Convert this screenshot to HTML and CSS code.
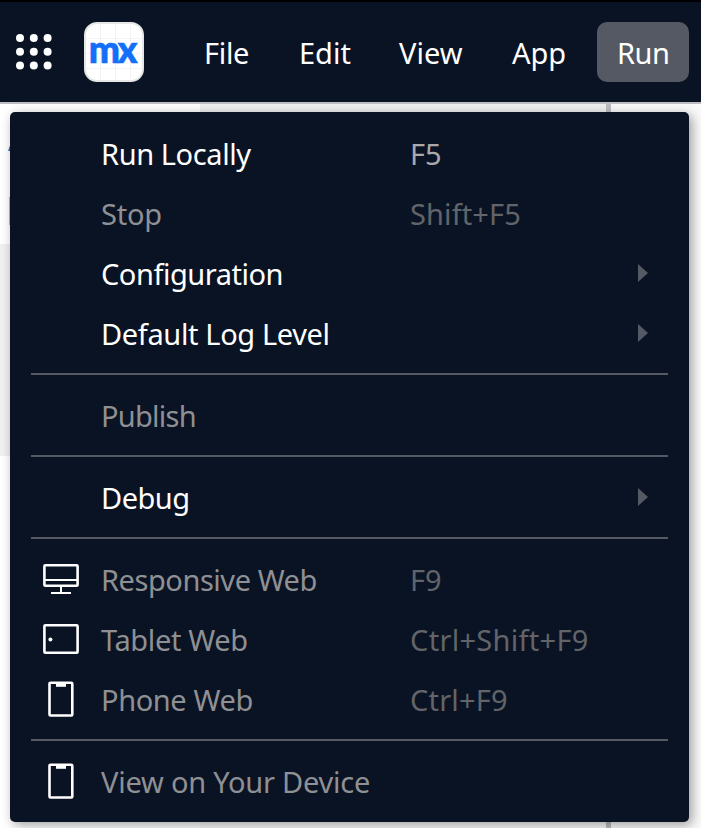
FILE: index.html
```html
<!DOCTYPE html>
<html lang="en">
<head>
<meta charset="utf-8">
<title>Run menu</title>
<link rel="stylesheet" href="styles.css">
</head>
<body>
<header class="bar">
  <svg class="grid" width="36" height="36" viewBox="0 0 36 36" fill="#fff"><circle cx="4" cy="4" r="4"/><circle cx="17.8" cy="4" r="4"/><circle cx="31.6" cy="4" r="4"/><circle cx="4" cy="17.8" r="4"/><circle cx="17.8" cy="17.8" r="4"/><circle cx="31.6" cy="17.8" r="4"/><circle cx="4" cy="31.6" r="4"/><circle cx="17.8" cy="31.6" r="4"/><circle cx="31.6" cy="31.6" r="4"/></svg>
  <div class="logo"><span>mx</span></div>
  <nav class="nav">
    <a class="tab file">File</a><a class="tab edit">Edit</a><a class="tab view">View</a><a class="tab app">App</a><a class="tab run">Run</a>
  </nav>
</header>
<main class="work">
  <div class="left"><div class="tree"><div class="sliver"></div><div class="edge"></div></div><div class="block"></div></div>
  <div class="mid"></div>
  <div class="split"></div>
  <div class="right"></div>
</main>
<div class="menu">
  <div class="item"><span class="label l-run">Run Locally</span><span class="key">F5</span></div>
  <div class="item off"><span class="label l-stop">Stop</span><span class="key k-shift">Shift+F5</span></div>
  <div class="item"><span class="label l-conf">Configuration</span><i class="arrow"></i></div>
  <div class="item"><span class="label l-log">Default Log Level</span><i class="arrow"></i></div>
  <hr>
  <div class="item off"><span class="label l-pub">Publish</span></div>
  <hr>
  <div class="item"><span class="label l-debug">Debug</span><i class="arrow"></i></div>
  <hr>
  <div class="item off">
    <svg class="icon" width="40" height="40" viewBox="0 0 40 40" fill="none" stroke="#fff" stroke-width="2"><rect x="3.4" y="6.3" width="33.2" height="20.4" rx="1" stroke-width="2.6"/><path d="M3 21h34M20 27v7M10 34h20"/></svg>
    <span class="label l-resp">Responsive Web</span><span class="key">F9</span></div>
  <div class="item off">
    <svg class="icon" width="40" height="40" viewBox="0 0 40 40" fill="none" stroke="#fff" stroke-width="2.6"><rect x="3.4" y="6.3" width="33.2" height="27.4" rx="1"/><circle cx="9.4" cy="20.6" r="2" fill="#fff" stroke="none"/></svg>
    <span class="label l-tab">Tablet Web</span><span class="key k-ctrlshift">Ctrl+Shift+F9</span></div>
  <div class="item off">
    <svg class="icon" width="40" height="40" viewBox="0 0 40 40" fill="none" stroke="#fff" stroke-width="2.6"><rect x="8.5" y="3.7" width="22.8" height="32.8" rx="1"/><path d="M15 6h10" stroke-width="3.6"/></svg>
    <span class="label l-phone">Phone Web</span><span class="key k-ctrl">Ctrl+F9</span></div>
  <hr>
  <div class="item off">
    <svg class="icon" width="40" height="40" viewBox="0 0 40 40" fill="none" stroke="#fff" stroke-width="2.6"><rect x="8.5" y="3.7" width="22.8" height="32.8" rx="1"/><path d="M15 6h10" stroke-width="3.6"/></svg>
    <span class="label l-device">View on Your Device</span></div>
</div>
</body>
</html>
```
FILE: styles.css
```css
* { box-sizing: border-box; }
body { margin: 0; width: 701px; height: 828px; overflow: hidden; position: relative; font: 29px/40px "Noto Sans", sans-serif; color: #fff; background: #fff; }
.bar { height: 104px; display: flex; align-items: flex-start; background: #0a1323; border-top: 2px solid #000; border-bottom: 2px solid #bebdc4; }
.grid { margin: 32px 0 0 16px; }
.logo { margin: 20px 0 0 32px; width: 60px; height: 60px; border-radius: 13px; border: 2px solid #e6e6e6; background: repeating-linear-gradient(90deg, transparent 0 14px, #f3f3f3 14px 15px), repeating-linear-gradient(transparent 0 14px, #f3f3f3 14px 15px), #fff; color: #146ff8; font: 900 37px/50px Lato, sans-serif; letter-spacing: -2.3px; -webkit-text-stroke: .7px #146ff8; padding-right: 4px; display: flex; justify-content: center; }
.nav { display: flex; margin: 20px 0 0 40px; }
.tab { height: 60px; padding: 11px 0 0 20px; white-space: nowrap; border-radius: 10px; }
.file { width: 95px; letter-spacing: -.3px; }
.edit { width: 100px; }
.view { width: 113px; }
.app { width: 105px; }
.run { width: 92px; background: #545964; letter-spacing: -.5px; }
.work { height: 724px; display: flex; }
.left { width: 200px; background: #fff; }
.tree { height: 140px; padding-top: 42px; }
.sliver { width: 3px; height: 5px; margin-left: 8px; background: #3c6fd8; clip-path: polygon(0 100%, 60% 0, 100% 0, 100% 100%); }
.edge { width: 2px; height: 28px; margin: 46px 0 0 9px; background: #b9b9c0; }
.block { width: 200px; height: 212px; background: #f0f0f0; }
.mid { width: 406px; background: linear-gradient(#f0f0f0 50%, #fafafa 50%); }
.split { width: 5px; background: #bebdc4; }
.right { width: 90px; background: #fafafa; }
.menu { position: absolute; left: 10px; top: 112px; width: 679px; height: 710px; padding: 11px 21px; border-radius: 5px; background: #0a1323; box-shadow: 3px 3px 12px rgba(0,0,0,.38); }
.item { height: 60px; display: grid; grid-template-columns: 70px 309px 1fr 20px; align-items: center; white-space: nowrap; }
.label { grid-column: 2; }
.label, .key { padding-top: 1px; }
.key { grid-column: 3; color: #aaaaaa; }
.off .label { color: #8f9094; }
.off .key { color: #616469; }
.l-run, .l-phone { letter-spacing: -.4px; }
.l-resp { letter-spacing: -.45px; }
.l-stop, .l-device { letter-spacing: -.22px; }
.l-conf { letter-spacing: -.47px; }
.l-log, .l-tab { letter-spacing: -.36px; }
.l-pub { letter-spacing: -.75px; }
.l-debug { letter-spacing: -.5px; }
.k-shift { letter-spacing: .12px; }
.k-ctrlshift { letter-spacing: .3px; }
.k-ctrl { letter-spacing: .2px; }
.icon { grid-column: 1; margin-left: 10px; }
.item > * { grid-row: 1; }
.arrow { grid-column: 4; width: 0; height: 0; margin-left: -10px; border-style: solid; border-width: 9px 0 9px 10px; border-color: transparent transparent transparent #545964; }
hr { margin: 10px 0; height: 2px; border: 0; background: #545964; }
```
